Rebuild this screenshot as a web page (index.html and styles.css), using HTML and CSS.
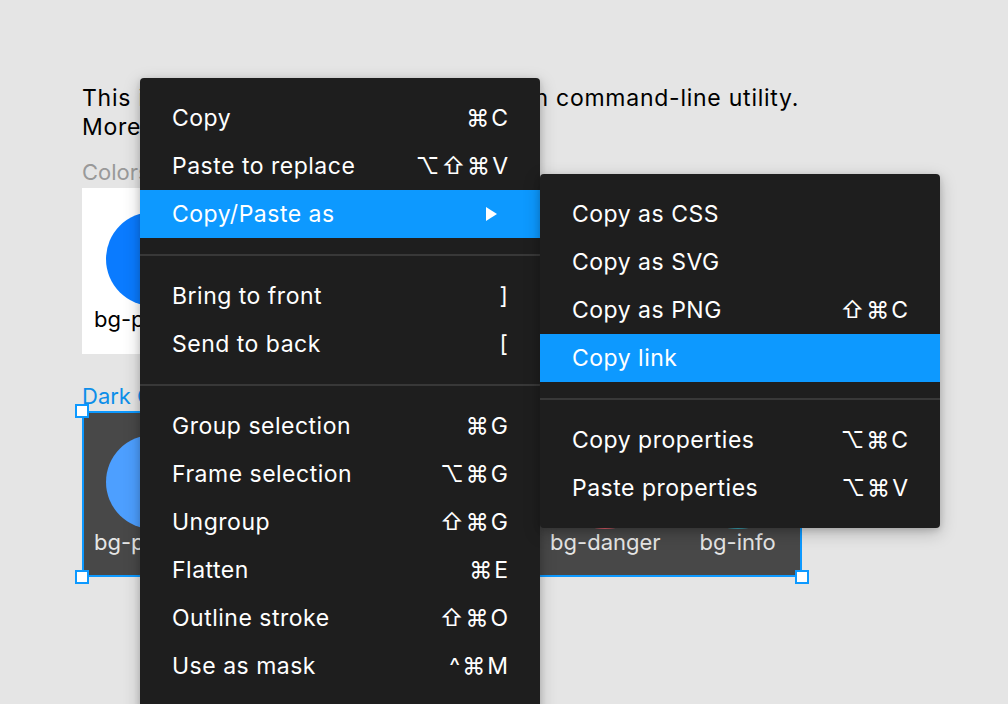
FILE: index.html
```html
<!DOCTYPE html>
<html lang="en">
<head>
<meta charset="utf-8">
<title>Context menu</title>
<link rel="stylesheet" href="styles.css">
</head>
<body>
<main class="page">
  <p class="intro">This is the colour palette generated with command-line utility.<br>More info about it in the readme file.</p>

  <section class="group">
    <div class="group-title">Colors</div>
    <div class="card light">
      <div class="swatch"><span class="dot c-primary"></span><span class="label">bg-primary</span></div>
      <div class="swatch"><span class="dot c-secondary"></span><span class="label">bg-secondary</span></div>
      <div class="swatch"><span class="dot c-success"></span><span class="label">bg-success</span></div>
      <div class="swatch"><span class="dot c-danger"></span><span class="label">bg-danger</span></div>
      <div class="swatch"><span class="dot c-info"></span><span class="label">bg-info</span></div>
    </div>
  </section>

  <section class="group">
    <div class="group-title selected-title">Dark Colors</div>
    <div class="card dark selected">
      <div class="swatch"><span class="dot d-primary"></span><span class="label">bg-primary</span></div>
      <div class="swatch"><span class="dot d-secondary"></span><span class="label">bg-secondary</span></div>
      <div class="swatch"><span class="dot d-success"></span><span class="label">bg-success</span></div>
      <div class="swatch"><span class="dot d-danger"></span><span class="label">bg-danger</span></div>
      <div class="swatch"><span class="dot d-info"></span><span class="label">bg-info</span></div>
      <span class="handle tl"></span>
      <span class="handle tr"></span>
      <span class="handle bl"></span>
      <span class="handle br"></span>
    </div>
  </section>
</main>

<div class="menu main-menu">
  <div class="item"><span>Copy</span><span class="keys"><i>⌘</i><i>C</i></span></div>
  <div class="item"><span>Paste to replace</span><span class="keys"><i>⌥</i><i>⇧</i><i>⌘</i><i>V</i></span></div>
  <div class="item active"><span>Copy/Paste as</span><svg class="arrow" width="11" height="14" viewBox="0 0 11 14"><polygon points="0,0 11,7 0,14" fill="#fff"/></svg></div>
  <div class="sep"></div>
  <div class="item"><span>Bring to front</span><span class="keys"><i>]</i></span></div>
  <div class="item"><span>Send to back</span><span class="keys"><i>[</i></span></div>
  <div class="sep"></div>
  <div class="item"><span>Group selection</span><span class="keys"><i>⌘</i><i>G</i></span></div>
  <div class="item"><span>Frame selection</span><span class="keys"><i>⌥</i><i>⌘</i><i>G</i></span></div>
  <div class="item"><span>Ungroup</span><span class="keys"><i>⇧</i><i>⌘</i><i>G</i></span></div>
  <div class="item"><span>Flatten</span><span class="keys"><i>⌘</i><i>E</i></span></div>
  <div class="item"><span>Outline stroke</span><span class="keys"><i>⇧</i><i>⌘</i><i>O</i></span></div>
  <div class="item"><span>Use as mask</span><span class="keys"><i>^</i><i>⌘</i><i>M</i></span></div>
  <div class="sep"></div>
</div>

<div class="menu sub-menu">
  <div class="item"><span>Copy as CSS</span></div>
  <div class="item"><span>Copy as SVG</span></div>
  <div class="item"><span>Copy as PNG</span><span class="keys"><i>⇧</i><i>⌘</i><i>C</i></span></div>
  <div class="item active"><span>Copy link</span></div>
  <div class="sep"></div>
  <div class="item"><span>Copy properties</span><span class="keys"><i>⌥</i><i>⌘</i><i>C</i></span></div>
  <div class="item"><span>Paste properties</span><span class="keys"><i>⌥</i><i>⌘</i><i>V</i></span></div>
</div>
</body>
</html>
```

FILE: styles.css
```css
html, body {
  margin: 0;
  padding: 0;
  overflow: hidden;
}

body {
  background: #e5e5e5;
  font-family: "Inter", "Noto Sans", "DejaVu Sans", sans-serif;
  color: #000;
  width: 1008px;
  height: 704px;
  position: relative;
}

.page {
  padding: 84px 0 0 82px;
}

.intro {
  margin: 0;
  font-size: 23px;
  line-height: 29px;
  letter-spacing: 0.75px;
  white-space: nowrap;
}

.group-title {
  font-size: 22px;
  line-height: 26px;
  color: #999;
  margin-bottom: 3px;
}

.group + .group .group-title {
  margin-top: 29px;
  margin-bottom: 2px;
}

.intro + .group .group-title {
  margin-top: 17px;
}

.selected-title {
  color: #0d8ee9;
}

.card {
  position: relative;
  width: 720px;
  height: 166px;
  box-sizing: border-box;
  padding: 24px 0 0 12px;
  display: flex;
  gap: 23px;
}

.card.light { background: #fff; }
.card.dark { background: #484848; }

.card.selected {
  outline: 2px solid #0d99ff;
  outline-offset: -2px;
}

.swatch {
  display: flex;
  flex-direction: column;
  align-items: center;
  min-width: 108px;
}

.dot {
  width: 94px;
  height: 94px;
  border-radius: 50%;
}

.label {
  font-size: 22px;
  line-height: 26px;
  white-space: nowrap;
}

.dark .label { color: #e6e6e6; }

.c-primary { background: #0a7bff; }
.c-secondary { background: #6c757d; }
.c-success { background: #28a745; }
.c-danger { background: #dc3545; }
.c-info { background: #17a2b8; }

.d-primary { background: #4d9fff; }
.d-secondary { background: #8a939b; }
.d-success { background: #48b461; }
.d-danger { background: #e35d6a; }
.d-info { background: #3aa8b9; }

.handle {
  position: absolute;
  width: 10px;
  height: 10px;
  background: #fff;
  border: 2px solid #0d99ff;
}
.handle.tl { left: -7px; top: -7px; }
.handle.tr { right: -7px; top: -7px; }
.handle.bl { left: -7px; bottom: -7px; }
.handle.br { right: -7px; bottom: -7px; }

.menu {
  position: absolute;
  width: 400px;
  box-sizing: border-box;
  background: #1e1e1e;
  border-radius: 4px;
  padding: 16px 0;
  color: #fff;
  font-size: 23px;
  letter-spacing: 0.5px;
  box-shadow: 0 5px 17px rgba(0, 0, 0, 0.22), 0 2px 6px rgba(0, 0, 0, 0.15);
}

.main-menu {
  left: 140px;
  top: 78px;
}

.sub-menu {
  left: 540px;
  top: 174px;
}

.item {
  height: 48px;
  display: flex;
  align-items: center;
  justify-content: space-between;
  padding: 0 32px;
  white-space: nowrap;
}

.item.active {
  background: #0d99ff;
}

.keys {
  display: flex;
  gap: 2px;
  letter-spacing: 0;
}

.keys i {
  font-style: normal;
}

.arrow {
  margin-right: 11px;
}

.sep {
  height: 2px;
  background: #383838;
  margin: 16px 0;
}
```
